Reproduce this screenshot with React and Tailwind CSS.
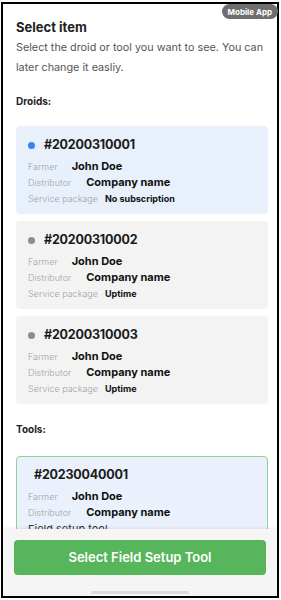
const droids = [
  { id: '#20200310001', active: true, pkg: 'No subscription' },
  { id: '#20200310002', active: false, pkg: 'Uptime' },
  { id: '#20200310003', active: false, pkg: 'Uptime' },
];

function Row({ label, value, valueClass, gap }) {
  return (
    <div className="flex items-center h-[16px]">
      <span className="text-[9px] text-[#a3a3a3] font-light">{label}</span>
      <span className={`${gap} ${valueClass} text-[#111] font-bold`}>{value}</span>
    </div>
  );
}

function Card({ item, tool }) {
  const bg = tool
    ? 'bg-[#eaf1fc] border border-[#8fd48f]'
    : item.active
      ? 'bg-[#e8f0fc]'
      : 'bg-[#f3f3f3]';
  return (
    <div className={`ml-[13px] w-[252px] rounded-[4px] ${bg} ${tool ? 'pl-[11px] pt-[9px]' : 'pl-[12px] pt-[10px]'} pb-[8px] h-[88px] shrink-0`}>
      <div className="flex items-center h-[20px]">
        {!tool && (
          <span className={`w-[7px] h-[7px] rounded-full ${item.active ? 'bg-[#3b82f6]' : 'bg-[#8c8c8c]'}`} />
        )}
        <span className={`${tool ? 'ml-[6px]' : 'ml-[9px]'} text-[12.5px] font-bold text-[#1a1a1a] tracking-[-0.2px]`}>{item.id}</span>
      </div>
      <div className="mt-[3px]">
        <Row label="Farmer" value="John Doe" valueClass="text-[11px]" gap="ml-[14px]" />
        <Row label="Distributor" value="Company name" valueClass="text-[11px]" gap="ml-[15px]" />
        {tool ? (
          <div className="h-[16px] text-[11px] text-[#333]">Field setup tool</div>
        ) : (
          <Row label="Service package" value={item.pkg} valueClass="text-[9px]" gap="ml-[7px]" />
        )}
      </div>
    </div>
  );
}

export default function App() {
  return (
    <div className="w-[281px] h-[600px] bg-white relative overflow-hidden" style={{ fontFamily: 'Inter, "Open Sans", sans-serif' }}>
      <div className="absolute left-[1px] top-[2px] w-[278px] h-[596px] border-[2px] border-black flex flex-col overflow-hidden bg-white">
        <div className="flex-1 overflow-hidden flex flex-col">
          <h1 className="mt-[14px] ml-[13px] text-[13px] font-bold text-[#222]">Select item</h1>
          <p className="mt-0 ml-[13px] mr-[6px] text-[10.8px] leading-[20px] text-[#555]">
            Select the droid or tool you want to see. You can later change it easliy.
          </p>
          <h2 className="mt-[16px] ml-[13px] text-[10px] font-bold text-[#222]">Droids:</h2>
          <div className="mt-[17px] flex flex-col gap-[7px]">
            {droids.map((d) => (
              <Card key={d.id} item={d} />
            ))}
          </div>
          <h2 className="mt-[18px] ml-[13px] text-[10px] font-bold text-[#222]">Tools:</h2>
          <div className="mt-[19px]">
            <Card item={{ id: '#20230040001' }} tool />
          </div>
        </div>
        <div className="h-[67px] shrink-0 bg-[#f5f5f5] shadow-[0_-1px_3px_rgba(0,0,0,0.08)] flex flex-col items-center relative">
          <button className="mt-[11px] w-[252px] h-[35px] rounded-[4px] bg-[#57b65c] text-white text-[13px] font-semibold">
            Select Field Setup Tool
          </button>
          <div className="mt-[16px] w-[98px] h-[3px] rounded-full bg-[#dcdcdc]" />
        </div>
      </div>
      <div className="absolute right-[3px] top-[4px] h-[15px] px-[6px] rounded-full bg-[#6e6e6e] text-white text-[8px] font-bold flex items-center">
        Mobile App
      </div>
    </div>
  );
}
